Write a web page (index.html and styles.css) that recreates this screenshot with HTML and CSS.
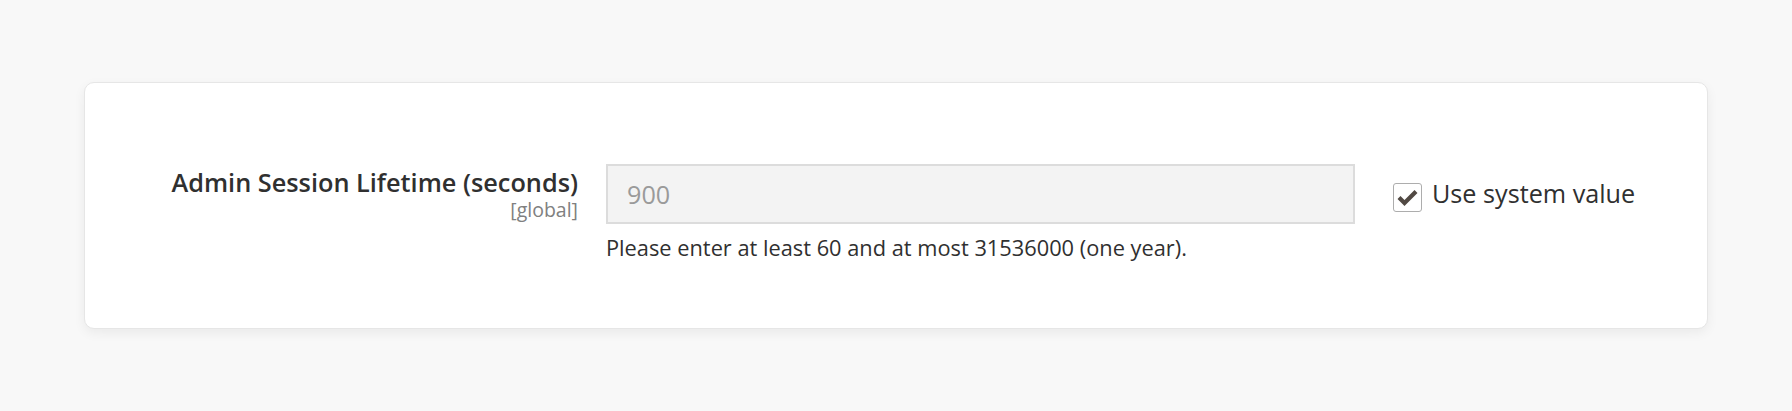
FILE: index.html
```html
<!DOCTYPE html>
<html lang="en">
<head>
    <meta charset="UTF-8">
    <meta name="viewport" content="width=device-width, initial-scale=1.0">
    <title>Admin - Security</title>
    <link rel="stylesheet" href="styles.css">
</head>
<body>
    <div class="card">
        <div class="field-label">
            <label for="sessionLifetime">Admin Session Lifetime (seconds)</label>
            <span class="scope">[global]</span>
        </div>
        <div class="field-control">
            <input type="text" id="sessionLifetime" class="control-text" value="900" disabled>
            <div class="note">Please enter at least 60 and at most 31536000 (one year).</div>
        </div>
        <div class="use-default">
            <span class="checkbox">
                <svg width="27" height="27" viewBox="0 0 27 27">
                    <path d="M5 13.5 L10.5 19 L22 7.5" fill="none" stroke="#514943" stroke-width="4.2" stroke-linecap="butt" stroke-linejoin="miter"/>
                </svg>
            </span>
            <span class="use-default-label">Use system value</span>
        </div>
    </div>
</body>
</html>
```

FILE: styles.css
```css
body {
    font-family: "Open Sans", "Liberation Sans", sans-serif;
    margin: 0;
    padding: 82px 84px;
    background-color: #f8f8f8;
    color: #303030;
}
.card {
    background-color: #fff;
    border: 1px solid #e6e6e6;
    border-radius: 10px;
    box-shadow: 0 4px 12px rgba(0, 0, 0, 0.06);
    padding: 81px 0 66px;
    display: grid;
    grid-template-columns: 493px 749px auto;
    column-gap: 28px;
    align-items: start;
}
.field-label {
    text-align: right;
    padding-top: 3px;
}
.field-label label {
    display: block;
    font-size: 25.3px;
    font-weight: 600;
    line-height: 30px;
}
.scope {
    display: block;
    font-size: 19.5px;
    line-height: 24px;
    color: #808080;
    margin-top: 1px;
}
.control-text {
    display: block;
    box-sizing: border-box;
    width: 100%;
    height: 60px;
    padding: 0 19px;
    font-family: inherit;
    font-size: 25.2px;
    color: #9a9a9a;
    background-color: #f3f3f3;
    border: 2px solid #dcdcdc;
    border-radius: 0;
    margin: 0;
}
.note {
    margin-top: 10px;
    font-size: 21.8px;
    line-height: 28px;
}
.use-default {
    display: flex;
    align-items: flex-start;
    gap: 10px;
    padding-top: 14px;
    margin-left: 10px;
}
.checkbox {
    display: flex;
    align-items: center;
    justify-content: center;
    width: 27px;
    height: 27px;
    margin-top: 5px;
    border: 1px solid #adadad;
    border-radius: 3px;
    background-color: #fff;
}
.use-default-label {
    font-size: 25.2px;
    line-height: 30px;
}
```
